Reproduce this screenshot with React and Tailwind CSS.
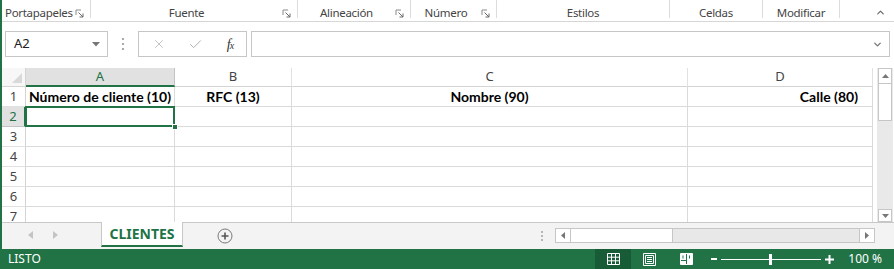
import { X, Check, ChevronDown, ChevronUp } from 'lucide-react'

const ui = { fontFamily: '"Noto Sans", "Open Sans", sans-serif' }
const cellFont = { fontFamily: 'Lato, "Liberation Sans", sans-serif' }

const groups = [
  { label: 'Portapapeles', w: 'w-[89px]', launcher: true, left: true },
  { label: 'Fuente', w: 'w-[207px]', launcher: true },
  { label: 'Alineación', w: 'w-[113px]', launcher: true },
  { label: 'Número', w: 'w-[86px]', launcher: true },
  { label: 'Estilos', w: 'w-[173px]' },
  { label: 'Celdas', w: 'w-[93px]' },
  { label: 'Modificar', w: 'w-[77px]' },
]

const cols = [
  { id: 'A', w: 'w-[149px]', head: 'Número de cliente (10)', align: 'justify-center' },
  { id: 'B', w: 'w-[117px]', head: 'RFC (13)', align: 'justify-center' },
  { id: 'C', w: 'w-[396px]', head: 'Nombre (90)', align: 'justify-center' },
  { id: 'D', w: 'w-[185px]', head: 'Calle (80)', align: 'justify-end pr-[14px]' },
]

function Launcher() {
  return (
    <svg width="9" height="9" viewBox="0 0 9 9" className="shrink-0">
      <path d="M1 1h5M1 1v5" stroke="#8a8a8a" strokeWidth="1" fill="none" />
      <path d="M3.5 3.5L8 8M8 4.5V8H4.5" stroke="#6a6a6a" strokeWidth="1" fill="none" />
    </svg>
  )
}

function Ribbon() {
  return (
    <div className="flex h-[22px] border-b border-[#d6d6d6] text-[11.5px] tracking-[-0.3px] text-[#444]" style={ui}>
      {groups.map((g) => (
        <div key={g.label} className={`${g.w} shrink-0 relative flex items-center`}>
          <div className={`flex-1 flex items-center whitespace-nowrap ${g.left ? 'pl-[3px]' : 'justify-center'} pt-[4px]`}>
            {g.label}
          </div>
          {g.launcher && <div className="pr-[6px] pt-[6px] flex"><Launcher /></div>}
          <div className="w-px h-[18px] self-start bg-[#dcdcdc]" />
        </div>
      ))}
      <div className="flex-1 flex items-center justify-end pr-[8px] pt-[4px]">
        <ChevronUp size={11} strokeWidth={2.5} color="#666" />
      </div>
    </div>
  )
}

function FormulaBar() {
  return (
    <div className="flex items-center h-[46px] pb-[2px] pl-[3px] pr-[4px]">
      <div className="w-[103px] h-[26px] border border-[#c6c6c6] flex items-center pl-[8px] pr-[7px] text-[13px] text-[#222]" style={ui}>
        <span className="flex-1">A2</span>
        <svg width="8" height="5" viewBox="0 0 8 5"><path d="M0 0h8L4 4.5z" fill="#777" /></svg>
      </div>
      <div className="w-[30px] flex flex-col items-center gap-[3px]">
        <div className="w-[2px] h-[2px] bg-[#aaa]" />
        <div className="w-[2px] h-[2px] bg-[#aaa]" />
        <div className="w-[2px] h-[2px] bg-[#aaa]" />
      </div>
      <div className="w-[109px] h-[26px] border border-[#c6c6c6] flex items-center">
        <div className="w-[36px] flex justify-center pl-[4px]"><X size={14} strokeWidth={1.3} color="#b0b0b0" /></div>
        <div className="w-[36px] flex justify-center pl-[4px]"><Check size={15} strokeWidth={1.6} color="#b0b0b0" /></div>
        <div className="flex-1 flex justify-center pl-[4px] text-[14px] italic text-[#333]" style={{ fontFamily: '"Liberation Serif", serif' }}>
          f<span className="text-[10px] -ml-px mt-[4px]">x</span>
        </div>
      </div>
      <div className="ml-[4px] flex-1 h-[26px] border border-[#c6c6c6] flex items-center justify-end pr-[6px]">
        <ChevronDown size={11} strokeWidth={3} color="#777" />
      </div>
    </div>
  )
}

function VScroll() {
  return (
    <div className="w-[16px] ml-[4px] flex flex-col bg-[#e9e9e9] border-x border-[#e9e9e9]">
      <div className="h-[16px] bg-white border border-[#c6c6c6] flex items-center justify-center">
        <svg width="7" height="4" viewBox="0 0 7 4"><path d="M0 4h7L3.5 0z" fill="#777" /></svg>
      </div>
      <div className="h-[37px] bg-white border-x border-b border-[#c6c6c6]" />
      <div className="flex-1" />
      <div className="h-[13px] bg-white border border-[#c6c6c6] flex items-center justify-center">
        <svg width="7" height="4" viewBox="0 0 7 4"><path d="M0 0h7L3.5 4z" fill="#777" /></svg>
      </div>
    </div>
  )
}

function Grid() {
  const rows = [1, 2, 3, 4, 5, 6, 7]
  return (
    <div className="flex h-[154px] overflow-hidden">
      <div className="flex flex-col">
        {/* column headers */}
        <div className="flex h-[19px] shrink-0 text-[13px] text-[#444]" style={ui}>
          <div className="w-[24px] bg-[#f7f7f7] border-r border-b border-[#d4d4d4] flex items-end justify-end p-[3px]">
            <svg width="10" height="10" viewBox="0 0 10 10"><path d="M10 0v10H0z" fill="#d9d9d9" /></svg>
          </div>
          {cols.map((c) => (
            <div
              key={c.id}
              className={`${c.w} flex items-center justify-center border-r ${c.id === 'A' ? 'bg-[#e1e1e1] border-b-2 border-b-[#217346] border-r-[#c3c3c3] text-[#217346]' : 'bg-white border-r-[#e1e1e1] border-b border-b-[#d4d4d4]'}`}
            >
              {c.id}
            </div>
          ))}
        </div>
        {rows.map((r) => (
          <div key={r} className="flex h-[20px] shrink-0">
            <div
              className={`w-[24px] shrink-0 flex items-center justify-center text-[13px] border-b ${r === 2 ? 'bg-[#e1e1e1] text-[#217346] border-r-2 border-r-[#217346] border-b-[#c3c3c3]' : 'bg-white text-[#444] border-r border-r-[#d4d4d4] border-b-[#e1e1e1]'}`}
              style={ui}
            >
              {r}
            </div>
            {cols.map((c) => (
              <div
                key={c.id}
                className={`${c.w} shrink-0 relative flex items-center whitespace-nowrap ${c.align} border-r border-b border-[#dadada] text-[14px] font-bold text-black`}
                style={cellFont}
              >
                {r === 1 ? c.head : null}
                {r === 2 && c.id === 'A' && (
                  <>
                    <div className="absolute -left-px -top-px -right-px -bottom-px border-2 border-[#217346] z-10" />
                    <div className="absolute -right-[4px] -bottom-[4px] w-[6px] h-[6px] bg-[#217346] border border-white z-20" />
                  </>
                )}
              </div>
            ))}
          </div>
        ))}
      </div>
      <VScroll />
    </div>
  )
}

function Tabs() {
  return (
    <div className="flex h-[27px] bg-[#f4f3f3] border-t border-[#c8c8c8]" style={ui}>
      <div className="w-[99px] flex items-center pl-[26px] gap-[20px] pb-[2px]">
        <svg width="5" height="8" viewBox="0 0 5 8"><path d="M5 0v8L0 4z" fill="#c4c4c4" /></svg>
        <svg width="5" height="8" viewBox="0 0 5 8"><path d="M0 0v8L5 4z" fill="#c4c4c4" /></svg>
      </div>
      <div className="w-[82px] -mt-px bg-white border-x border-[#c8c8c8] border-b-2 border-b-[#217346] flex items-center justify-center text-[14px] font-bold text-[#217346] h-[25px]">
        CLIENTES
      </div>
      <div className="w-[82px] flex items-center justify-center pl-[2px]">
        <svg width="16" height="16" viewBox="0 0 16 16">
          <circle cx="8" cy="8" r="7" fill="none" stroke="#7a7a7a" strokeWidth="1" />
          <path d="M8 4.5v7M4.5 8h7" stroke="#555" strokeWidth="1.6" />
        </svg>
      </div>
      <div className="flex-1 flex items-center justify-end">
        <div className="flex flex-col gap-[2px] mr-[12px]">
          <div className="w-[2px] h-[2px] bg-[#b5b5b5]" />
          <div className="w-[2px] h-[2px] bg-[#b5b5b5]" />
          <div className="w-[2px] h-[2px] bg-[#b5b5b5]" />
        </div>
        <div className="w-[320px] h-[15px] flex border border-[#c6c6c6] bg-[#e8e8e8] mr-[19px] mb-[1px]">
          <div className="w-[15px] bg-white border-r border-[#c6c6c6] flex items-center justify-center">
            <svg width="4" height="7" viewBox="0 0 4 7"><path d="M4 0v7L0 3.5z" fill="#777" /></svg>
          </div>
          <div className="w-[102px] bg-white border-r border-[#c6c6c6]" />
          <div className="flex-1" />
          <div className="w-[15px] bg-white border-l border-[#c6c6c6] flex items-center justify-center">
            <svg width="4" height="7" viewBox="0 0 4 7"><path d="M0 0v7L4 3.5z" fill="#777" /></svg>
          </div>
        </div>
      </div>
    </div>
  )
}

function StatusBar() {
  return (
    <div className="flex items-center h-[20px] bg-[#217346] text-white text-[12px]" style={ui}>
      <div className="flex-1 pl-[6px]">LISTO</div>
      <div className="w-[36px] h-full bg-[#185c37] flex items-center justify-center">
        <svg width="13" height="12" viewBox="0 0 13 12">
          <path d="M.5.5h12v11H.5zM4.5.5v11M8.5.5v11M.5 4.2h12M.5 7.8h12" stroke="#fff" fill="none" strokeWidth="1" />
        </svg>
      </div>
      <div className="w-[36px] flex items-center justify-center">
        <svg width="13" height="13" viewBox="0 0 13 13">
          <path d="M.5.5h12v12H.5zM2.5 2.5h8v8h-8z" stroke="#fff" fill="none" strokeWidth="1" />
          <path d="M4 4.5h5M4 6.5h5M4 8.5h5" stroke="#fff" strokeWidth="1" />
        </svg>
      </div>
      <div className="w-[38px] flex items-center justify-center">
        <svg width="13" height="12" viewBox="0 0 13 12">
          <path d="M.5.5h12v11H.5z" stroke="#fff" fill="none" strokeWidth="1" />
          <path d="M1 1h5v6H1zM7 1h5v10H7zM1 8h5v3H1z" fill="#fff" />
          <path d="M3 2.5v3M9.5 2.5v3" stroke="#217346" strokeWidth="1" />
        </svg>
      </div>
      <div className="flex items-center ml-[6px] mr-[10px]">
        <div className="w-[6px] h-[2px] bg-white" />
        <div className="relative w-[100px] h-px bg-white mx-[4px]">
          <div className="absolute left-[48px] -top-[5px] w-[3px] h-[11px] bg-white" />
        </div>
        <svg width="9" height="9" viewBox="0 0 9 9"><path d="M4.5 0v9M0 4.5h9" stroke="#fff" strokeWidth="2" /></svg>
      </div>
      <div className="w-[50px] pr-[12px] text-right text-[12px]">100 %</div>
    </div>
  )
}

export default function App() {
  return (
    <div className="w-[894px] h-[269px] overflow-hidden bg-white flex flex-col border-l-2 border-[#217346]">
      <Ribbon />
      <FormulaBar />
      <Grid />
      <Tabs />
      <StatusBar />
    </div>
  )
}
